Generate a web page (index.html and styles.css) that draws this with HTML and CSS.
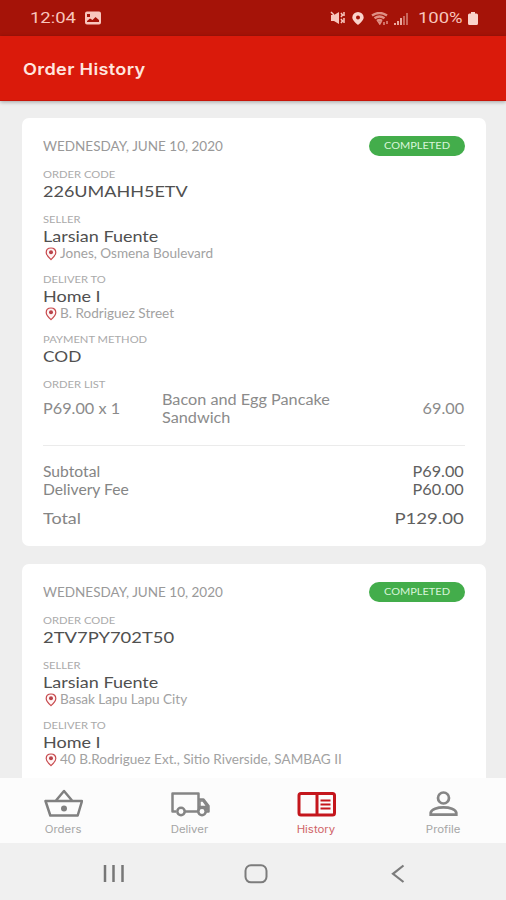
FILE: index.html
```html
<!DOCTYPE html>
<html lang="en">
<head>
<meta charset="utf-8">
<title>Order History</title>
<link rel="stylesheet" href="styles.css">
</head>
<body>
<svg width="0" height="0" class="defs">
  <symbol id="pin" viewBox="0 0 12 14"><path d="M6 1C3 1 1.2 3 1.2 5.4 1.2 8.3 6 12.6 6 12.6S10.8 8.300 10.800 5.400C10.800 3 9 1 6 1Z" fill="#fff4f4" stroke="#c7494d" stroke-width="1.200"/><circle cx="6" cy="5.300" r="2" fill="#b9434a"/></symbol>
</svg>
<div class="phone">
  <header class="status">
    <span class="clock"><span class="t">12:04</span></span>
    <svg class="pic" width="16" height="14" viewBox="0 0 16 14"><path fill-rule="evenodd" d="M2 .5h12a2 2 0 0 1 2 2v9a2 2 0 0 1-2 2H2a2 2 0 0 1-2-2v-9a2 2 0 0 1 2-2ZM2 11h12V9l-3.500-3-3 3L5 7.500 2 10ZM2 3v3h3V3Z" fill="#f8c6bd"/></svg>
    <span class="grow"></span>
    <svg width="16" height="14" viewBox="0 0 16 14" fill="#f8c6bd"><path d="M1 4h3l5-3v12L4 10H1Z"/><path d="M1 1l3 3M11 2l1.500 2L11 6M14 1v4M14 7v5M11 8l1.500 2L11 12" fill="none" stroke="#f8c6bd" stroke-width="1.500"/></svg>
    <svg class="place" width="12" height="13" viewBox="0 0 12 13"><path fill-rule="evenodd" d="M6 0a5.700 5.700 0 0 1 5.700 5.500C11.700 8.500 6 13 6 13S.3 8.500.3 5.500A5.700 5.700 0 0 1 6 0Zm0 3.500a2 2 0 1 0 0 4 2 2 0 0 0 0-4Z" fill="#fbd3cb"/></svg>
    <svg class="wifi" width="19" height="13" viewBox="0 0 19 13" fill="none" stroke="#df8f84"><path d="M1 3.500q7.500-5 15 0M3.500 6.300q5-3.500 10 0M6 9q2.500-2 5 0" stroke-width="2.400"/><path d="M7.500 10h2.500l-1.200 2ZM13 10v3M16 9v3" fill="#f0aaa0" stroke-width="1.500"/></svg>
    <svg class="signal" width="14" height="13" viewBox="0 0 14 13"><path d="M0 11h2v2H0zM3 9h2v4H3zM6 6h2v7H6z" fill="#eaa89e"/><path d="M9 4h2v9H9zM12 1h2v12h-2z" fill="#c9665b"/></svg>
    <span class="percent"><span class="t">100%</span></span>
    <svg width="10" height="13" viewBox="0 0 10 13"><path d="M3 0h4v1.500h1.500Q10 1.500 10 3v8.500q0 1.500-1.500 1.500h-7Q0 13 0 11.500V3q0-1.500 1.500-1.500H3Z" fill="#fbd3cb"/></svg>
  </header>
  <div class="titlebar"><h1><span class="t">Order History</span></h1></div>
  <main class="feed">
    <article class="card">
      <div class="top"><span class="date"><span class="t">WEDNESDAY, JUNE 10, 2020</span></span><span class="badge"><span class="t">COMPLETED</span></span></div>
      <section><div class="label"><span class="t">ORDER CODE</span></div><div class="value"><span class="t">226UMAHH5ETV</span></div></section>
      <section><div class="label"><span class="t">SELLER</span></div><div class="value"><span class="t">Larsian Fuente</span></div>
        <div class="address"><svg width="12" height="14"><use href="#pin"/></svg><span class="t">Jones, Osmena Boulevard</span></div></section>
      <section class="near"><div class="label"><span class="t">DELIVER TO</span></div><div class="value"><span class="t">Home I</span></div>
        <div class="address"><svg width="12" height="14"><use href="#pin"/></svg><span class="t">B. Rodriguez Street</span></div></section>
      <section class="near"><div class="label"><span class="t">PAYMENT METHOD</span></div><div class="value cod"><span class="t">COD</span></div></section>
      <section><div class="label"><span class="t">ORDER LIST</span></div>
        <div class="item"><span class="qty"><span class="t">P69.00 x 1</span></span><span class="name"><span class="t">Bacon and Egg Pancake<br>Sandwich</span></span><span class="amount"><span class="t">69.00</span></span></div></section>
      <div class="totals">
        <div class="line"><span class="t">Subtotal</span><span class="amount"><span class="t">P69.00</span></span></div>
        <div class="line"><span class="t">Delivery Fee</span><span class="amount"><span class="t">P60.00</span></span></div>
        <div class="line total"><span class="t">Total</span><span class="amount"><span class="t">P129.00</span></span></div>
      </div>
    </article>
    <article class="card">
      <div class="top"><span class="date"><span class="t">WEDNESDAY, JUNE 10, 2020</span></span><span class="badge"><span class="t">COMPLETED</span></span></div>
      <section><div class="label"><span class="t">ORDER CODE</span></div><div class="value code-wide"><span class="t">2TV7PY702T50</span></div></section>
      <section><div class="label"><span class="t">SELLER</span></div><div class="value"><span class="t">Larsian Fuente</span></div>
        <div class="address"><svg width="12" height="14"><use href="#pin"/></svg><span class="t">Basak Lapu Lapu City</span></div></section>
      <section class="near"><div class="label"><span class="t">DELIVER TO</span></div><div class="value"><span class="t">Home I</span></div>
        <div class="address"><svg width="12" height="14"><use href="#pin"/></svg><span class="t">40 B.Rodriguez Ext., Sitio Riverside, SAMBAG II</span></div></section>
    </article>
  </main>
  <nav class="tabs">
    <a class="tab"><svg width="40" height="30" viewBox="0 0 40 30" fill="none" stroke="#808080" stroke-width="2.500" stroke-linejoin="round"><path d="M2.500 12h36.500l-4.300 14.500H7.300ZM13 11.500 21 2l8 9.500"/><circle cx="21" cy="19.500" r="3" fill="#808080" stroke="none"/></svg><span class="t">Orders</span></a>
    <a class="tab"><svg width="40" height="30" viewBox="0 0 40 30" fill="none" stroke="#858585" stroke-width="2.500" stroke-linejoin="round"><path d="M6 22.500H2.500V4.500h26v18H15M28.500 10.500h5l5 6.500v5.500H36"/><path d="M30 12h3l4 5.500h-7Z" fill="#fcfcfc" stroke-width="1.500"/><path d="M29 17h9v4h-9Z" fill="#858585" stroke="none"/><circle cx="11" cy="22.500" r="3.700" fill="#fcfcfc"/><circle cx="32" cy="22.500" r="3.700" fill="#fcfcfc"/></svg><span class="t">Deliver</span></a>
    <a class="tab active"><svg width="40" height="30" viewBox="0 0 40 30" fill="none" stroke="#c4161c"><rect x="3" y="4.500" width="35.500" height="21.500" rx="2" stroke-width="3"/><path d="M21 4v22" stroke-width="3"/><path d="M24.500 11.500h10M24.500 15.500h10M24.500 19.500h10" stroke-width="1.800"/></svg><span class="t">History</span></a>
    <a class="tab"><svg width="40" height="30" viewBox="0 0 40 30" fill="none" stroke="#858585" stroke-width="2.700"><circle cx="20.500" cy="9" r="5.500"/><path d="M7.700 25.700v-2C9 16.500 32 16.500 33.300 23.700v2Z"/></svg><span class="t">Profile</span></a>
  </nav>
  <footer class="system">
    <svg width="22" height="20" viewBox="0 0 22 20" stroke="#777" stroke-width="2.500"><path d="M2 1v17M10.500 1v17M19.500 1v17"/></svg>
    <svg class="home" width="24" height="20" viewBox="0 0 24 20" fill="none" stroke="#7c7c7c" stroke-width="2"><rect x="1.500" y="1.300" width="21" height="17" rx="5.500"/></svg>
    <svg width="14" height="20" viewBox="0 0 14 20" fill="none" stroke="#7c7c7c" stroke-width="2.200"><path d="M12.500 1.500 2 9.800l10.500 8.200"/></svg>
  </footer>
</div>
</body>
</html>
```
FILE: styles.css
```css
* { box-sizing: border-box; }
body { margin: 0; font-family: Lato, "Open Sans", sans-serif; color: #8b8b8b; --wide: 1.18; }
.defs { display: block; }
.phone { width: 506px; height: 900px; display: flex; flex-direction: column; background: #eee; overflow: hidden; }
.t { display: inline-block; transform: scaleX(var(--wide)); transform-origin: left center; white-space: nowrap; }
.status { height: 36px; flex: none; display: flex; align-items: center; padding: 0 28px 0 30px; background: #a51308; color: #f8c6bd; font: 15px Roboto, sans-serif; }
.clock { width: 55px; --wide: 1.23; }
.percent { width: 50px; --wide: 1.23; }
.grow { flex: 1; }
.place { margin: 0 7px 0 6px; }
.signal { margin: 0 10px 0 4px; }
.titlebar { height: 65px; flex: none; display: flex; align-items: center; padding: 2px 23px 0; background: #da1a0b; border-bottom: 1px solid #c81509; box-shadow: 0 1px 4px #0005; z-index: 1; }
h1 { margin: 0; color: #ffe5df; font: 600 16.500px/24px Inter, sans-serif; letter-spacing: .3px; --wide: 1.1; }
.feed { flex: 1; min-height: 0; overflow: hidden; padding: 17px 20px 0 22px; }
.card { background: #fff; border-radius: 7px; height: 428px; padding: 18px 21px; margin-bottom: 18px; }
.top { display: flex; justify-content: space-between; align-items: center; height: 20px; }
.date { font-size: 12.500px; color: #999; --wide: 1.08; }
.badge { width: 96px; height: 20px; border-radius: 10px; background: #43ad4b; color: #d9f5da; font-size: 10px; line-height: 19px; text-align: center; --wide: 1.1; }
.badge .t { transform-origin: center; }
section { margin-top: 12px; }
section.near { margin-top: 11px; }
.label { height: 12px; font-size: 9.500px; line-height: 13px; color: #aaa; }
.value { height: 21px; font-size: 16px; line-height: 21px; color: #505050; --wide: 1.125; }
.code-wide { --wide: 1.15; }
.cod { --wide: 1.08; line-height: 22px; }
.address { height: 16px; display: flex; align-items: center; padding-left: 2px; gap: 3px; font-size: 12.500px; line-height: 16px; color: #a2a2a2; --wide: 1.085; }
.item { display: flex; align-items: center; height: 38px; font-size: 14.500px; line-height: 18px; --wide: 1.12; }
.qty { width: 119px; }
.amount { margin-left: auto; margin-right: 1px; --wide: 1.12; }
.amount .t { transform-origin: right center; }
.totals { margin-top: 17px; border-top: 1px solid #ebebeb; padding-top: 17px; font-size: 14.500px; line-height: 18px; --wide: 1.08; }
.line { display: flex; color: #858585; }
.line .amount { color: #606060; }
.total { margin-top: 9px; font-size: 16px; line-height: 20px; --wide: 1.12; }
.total .amount { --wide: 1.16; }
.tabs { height: 65px; flex: none; display: flex; background: #fcfcfc; z-index: 1; }
.tab { flex: 1; display: flex; flex-direction: column; align-items: center; padding-top: 11px; color: #a5a5a5; font: 10px/20px Inter, sans-serif; --wide: 1.14; }
.tab .t { transform-origin: center; }
.active { color: #d06468; }
.system { height: 57px; flex: none; display: flex; align-items: center; justify-content: space-between; padding: 4px 101px 0 103px; background: #f0f0f0; }
.home { margin-right: 5px; }
```
